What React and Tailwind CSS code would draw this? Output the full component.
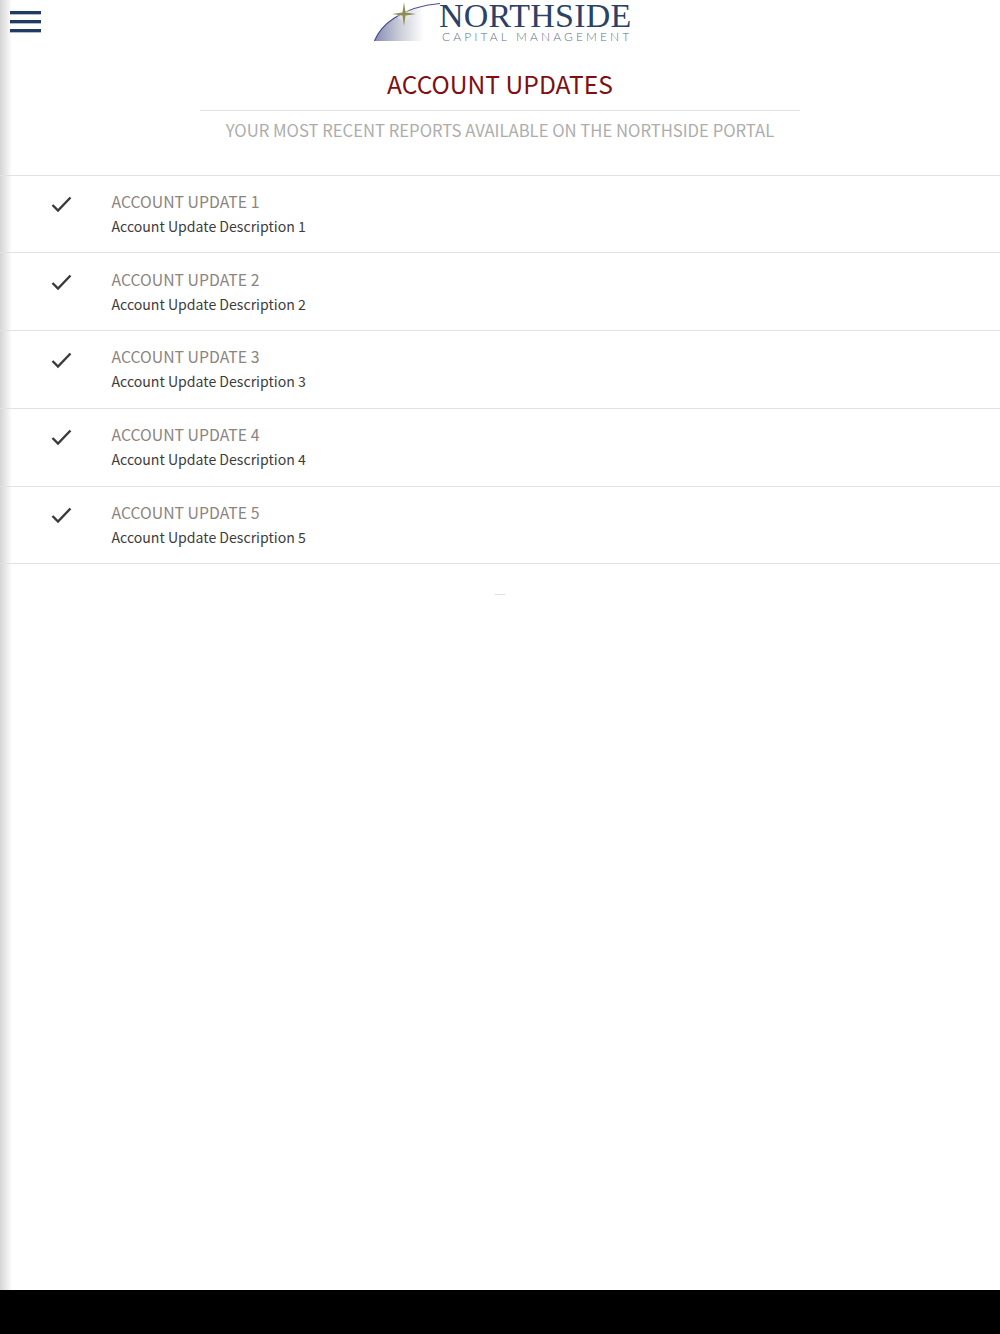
const updates = [1, 2, 3, 4, 5]
const font = { fontFamily: '"Noto Sans CJK SC", "Noto Sans", sans-serif' }

function Logo() {
  return (
    <div className="relative w-[262px] h-[44px] ml-[10px]">
      <svg className="absolute left-0 top-0" width="80" height="44" viewBox="0 0 80 44">
        <defs>
          <linearGradient id="swoosh" gradientUnits="userSpaceOnUse" x1="0" y1="0" x2="50" y2="0">
            <stop offset="0" stopColor="#858bb4" />
            <stop offset="0.5" stopColor="#c9ccd6" />
            <stop offset="1" stopColor="#ffffff" />
          </linearGradient>
          <radialGradient id="glow">
            <stop offset="0" stopColor="#e9e8c8" />
            <stop offset="1" stopColor="#ffffff" stopOpacity="0" />
          </radialGradient>
        </defs>
        <path d="M0.5 41 C6 26 26 7 66 3.5 L66 41 Z" fill="url(#swoosh)" />
        <path d="M0.5 41 C6 26 26 7 66 3.5" fill="none" stroke="#4a4f93" strokeWidth="1.2" />
        <circle cx="30" cy="14" r="8" fill="url(#glow)" />
        <path d="M30 2 L31.5 12.5 L42 14 L31.5 15.5 L30 26 L28.5 15.5 L18 14 L28.5 12.5 Z" fill="#8e8c52" />
      </svg>
      <div className="absolute left-[65px] top-[2px] text-[34px] leading-[28px] text-[#2a4268] tracking-[0.2px] whitespace-nowrap" style={{ fontFamily: '"Liberation Serif", serif' }}>
        NORTHSIDE
      </div>
      <div className="absolute left-[68px] top-[31px] text-[12px] leading-[12px] font-light text-[#5f7088] tracking-[3.12px] whitespace-nowrap" style={{ fontFamily: 'Lato, sans-serif' }}>
        CAPITAL MANAGEMENT
      </div>
    </div>
  )
}

export default function App() {
  return (
    <div className="relative h-[1334px] flex flex-col bg-white overflow-hidden" style={font}>
      <div className="absolute left-0 top-0 w-[12px] h-[1290px] bg-gradient-to-r from-[#d4d4d4] to-white" />

      <main className="relative flex-1">
        <header className="relative flex justify-center h-[44px]">
          <button className="absolute left-[10px] top-[11px] flex flex-col gap-[6px]">
            <span className="block w-[31px] h-[3px] bg-[#1f3a63] shadow-[0_1px_0_rgba(31,58,99,0.35)]" />
            <span className="block w-[31px] h-[3px] bg-[#1f3a63] shadow-[0_1px_0_rgba(31,58,99,0.35)]" />
            <span className="block w-[31px] h-[3px] bg-[#1f3a63] shadow-[0_1px_0_rgba(31,58,99,0.35)]" />
          </button>
          <Logo />
        </header>

        <h1 className="mt-[20px] text-center text-[24.6px] leading-[38px] text-[#7f0f12]">ACCOUNT UPDATES</h1>
        <div className="w-[600px] mx-auto mt-[8px] border-t border-[#e0e0e0]" />
        <p className="mt-[6px] text-center text-[16.67px] leading-[26px] text-[#adadad]">
          YOUR MOST RECENT REPORTS AVAILABLE ON THE NORTHSIDE PORTAL
        </p>

        <ul className="mt-[31.5px] border-t border-[#e2e2e2]">
          {updates.map((n) => (
            <li key={n} className="flex h-[77.8px] border-b border-[#e2e2e2]">
              <div className="w-[111.5px] pl-[50px] pt-[19.5px]">
                <svg width="23" height="19" viewBox="0 0 23 19" fill="none" stroke="#3a3a3a" strokeWidth="2.4">
                  <path d="M2.5 10 L8 15.5 L20.5 2.5" />
                </svg>
              </div>
              <div className="pt-[13.4px]">
                <div className="text-[15.8px] leading-[25px] text-[#8c8482]">ACCOUNT UPDATE {n}</div>
                <div className="text-[14.1px] leading-[25px] text-[#3d3d3d]">Account Update Description {n}</div>
              </div>
            </li>
          ))}
        </ul>

        <div className="w-[10px] mx-auto mt-[29.5px] border-t border-[#e0e0e0]" />
      </main>

      <footer className="h-[44px] bg-black" />
    </div>
  )
}
